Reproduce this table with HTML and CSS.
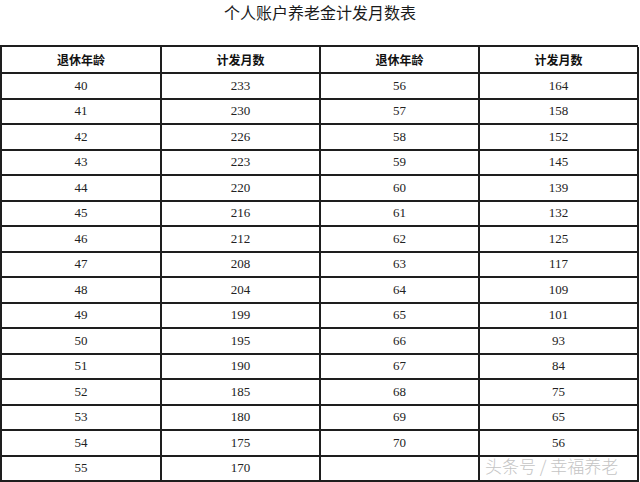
FILE: index.html
```html
<!DOCTYPE html>
<html lang="zh">
<head>
<meta charset="utf-8">
<link rel="stylesheet" href="styles.css">
</head>
<body>
<div class="page">
  <h1 class="title">个人账户养老金计发月数表</h1>
  <div class="table">
    <div class="cell head">退休年龄</div><div class="cell head">计发月数</div><div class="cell head">退休年龄</div><div class="cell head">计发月数</div>
    <div class="cell">40</div><div class="cell">233</div><div class="cell">56</div><div class="cell">164</div>
    <div class="cell">41</div><div class="cell">230</div><div class="cell">57</div><div class="cell">158</div>
    <div class="cell">42</div><div class="cell">226</div><div class="cell">58</div><div class="cell">152</div>
    <div class="cell">43</div><div class="cell">223</div><div class="cell">59</div><div class="cell">145</div>
    <div class="cell">44</div><div class="cell">220</div><div class="cell">60</div><div class="cell">139</div>
    <div class="cell">45</div><div class="cell">216</div><div class="cell">61</div><div class="cell">132</div>
    <div class="cell">46</div><div class="cell">212</div><div class="cell">62</div><div class="cell">125</div>
    <div class="cell">47</div><div class="cell">208</div><div class="cell">63</div><div class="cell">117</div>
    <div class="cell">48</div><div class="cell">204</div><div class="cell">64</div><div class="cell">109</div>
    <div class="cell">49</div><div class="cell">199</div><div class="cell">65</div><div class="cell">101</div>
    <div class="cell">50</div><div class="cell">195</div><div class="cell">66</div><div class="cell">93</div>
    <div class="cell">51</div><div class="cell">190</div><div class="cell">67</div><div class="cell">84</div>
    <div class="cell">52</div><div class="cell">185</div><div class="cell">68</div><div class="cell">75</div>
    <div class="cell">53</div><div class="cell">180</div><div class="cell">69</div><div class="cell">65</div>
    <div class="cell">54</div><div class="cell">175</div><div class="cell">70</div><div class="cell">56</div>
    <div class="cell">55</div><div class="cell">170</div><div class="cell"></div><div class="cell"></div>
  </div>
  <div class="watermark">头条号 / 幸福养老</div>
</div>
</body>
</html>
```

FILE: styles.css
```css
html, body {
  margin: 0;
  padding: 0;
  background: #ffffff;
}

.page {
  position: relative;
  width: 640px;
  height: 482px;
  overflow: hidden;
}

.title {
  margin: 0;
  height: 45px;
  padding-top: 2px;
  box-sizing: border-box;
  text-align: center;
  font-family: "Noto Sans CJK SC", sans-serif;
  font-weight: 400;
  font-size: 16px;
  line-height: 20px;
  color: #1a1a1a;
}

.table {
  display: grid;
  grid-template-columns: 160px 159px 159px 159px;
  grid-template-rows: 27px;
  grid-auto-rows: 25.5px;
  width: 638px;
  box-sizing: border-box;
  border-top: 2px solid #1e1e1e;
  border-left: 2px solid #1e1e1e;
}

.cell {
  display: flex;
  align-items: center;
  justify-content: center;
  border-right: 2px solid #1e1e1e;
  border-bottom: 2px solid #1e1e1e;
  font-family: "Liberation Serif", serif;
  font-size: 13px;
  color: #222;
}

.head {
  font-family: "Noto Sans CJK SC", sans-serif;
  font-weight: 700;
  font-size: 12px;
  color: #111;
}

.watermark {
  position: absolute;
  left: 485px;
  top: 455px;
  font-family: "Noto Sans CJK SC", sans-serif;
  font-weight: 300;
  font-size: 17px;
  line-height: 22px;
  color: #c4c4c4;
  white-space: nowrap;
}
```
